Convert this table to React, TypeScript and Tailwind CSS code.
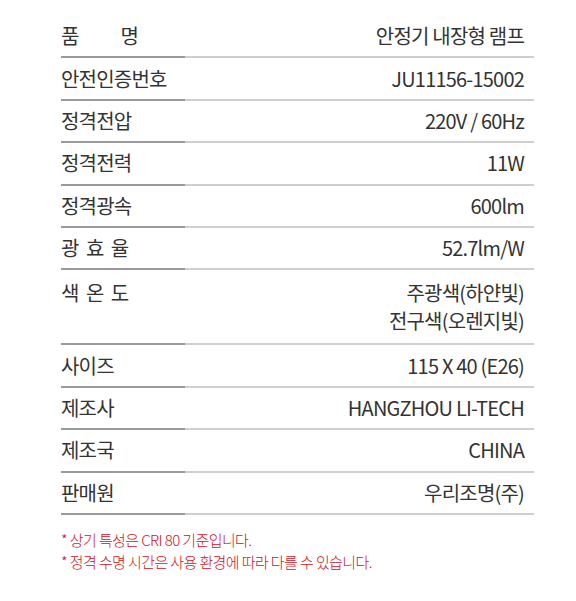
const rows: { label: React.ReactNode; value: React.ReactNode; tall?: boolean }[] = [
  {
    label: (
      <span className="flex w-[77px] justify-between">
        <span>품</span>
        <span>명</span>
      </span>
    ),
    value: "안정기 내장형 램프",
  },
  { label: "안전인증번호", value: "JU11156-15002" },
  { label: "정격전압", value: "220V / 60Hz" },
  { label: "정격전력", value: "11W" },
  { label: "정격광속", value: "600lm" },
  { label: "광 효 율", value: "52.7lm/W" },
  {
    label: "색 온 도",
    value: (
      <>
        <div>주광색(하얀빛)</div>
        <div>전구색(오렌지빛)</div>
      </>
    ),
    tall: true,
  },
  { label: "사이즈", value: "115 X 40 (E26)" },
  { label: "제조사", value: "HANGZHOU LI-TECH" },
  { label: "제조국", value: "CHINA" },
  { label: "판매원", value: "우리조명(주)" },
];

const Line = () => (
  <div className="flex h-[2px]">
    <div className="w-[124px] bg-[#9a9a9a]" />
    <div className="flex-1 bg-[#cfcfcf]" />
  </div>
);

export default function App() {
  return (
    <div
      className="min-h-[601px] w-[576px] bg-white pl-[61px] pr-[42px] pt-[16px] text-[#333]"
      style={{ fontFamily: '"Noto Sans CJK KR", "Noto Sans", sans-serif' }}
    >
      {rows.map((r, i) => (
        <div key={i}>
          <div
            className={
              r.tall
                ? "flex h-[73px] items-center justify-between text-[20px] tracking-[-0.8px] leading-[28px]"
                : "flex h-[40.4px] items-center justify-between text-[20px] tracking-[-0.8px]"
            }
          >
            <div className={r.tall ? "self-start pt-[9px]" : ""}>
              {r.label === "광 효 율" || r.label === "색 온 도" ? (
                <span className="tracking-[1px]">{r.label}</span>
              ) : (
                r.label
              )}
            </div>
            <div className="pr-[10px] text-right">{r.value}</div>
          </div>
          <Line />
        </div>
      ))}
      <div className="pt-[14px] text-[15px] font-light leading-[22px] tracking-[-0.6px] text-[#d0121b]">
        <div>* 상기 특성은 CRI 80 기준입니다.</div>
        <div>* 정격 수명 시간은 사용 환경에 따라 다를 수 있습니다.</div>
      </div>
    </div>
  );
}
